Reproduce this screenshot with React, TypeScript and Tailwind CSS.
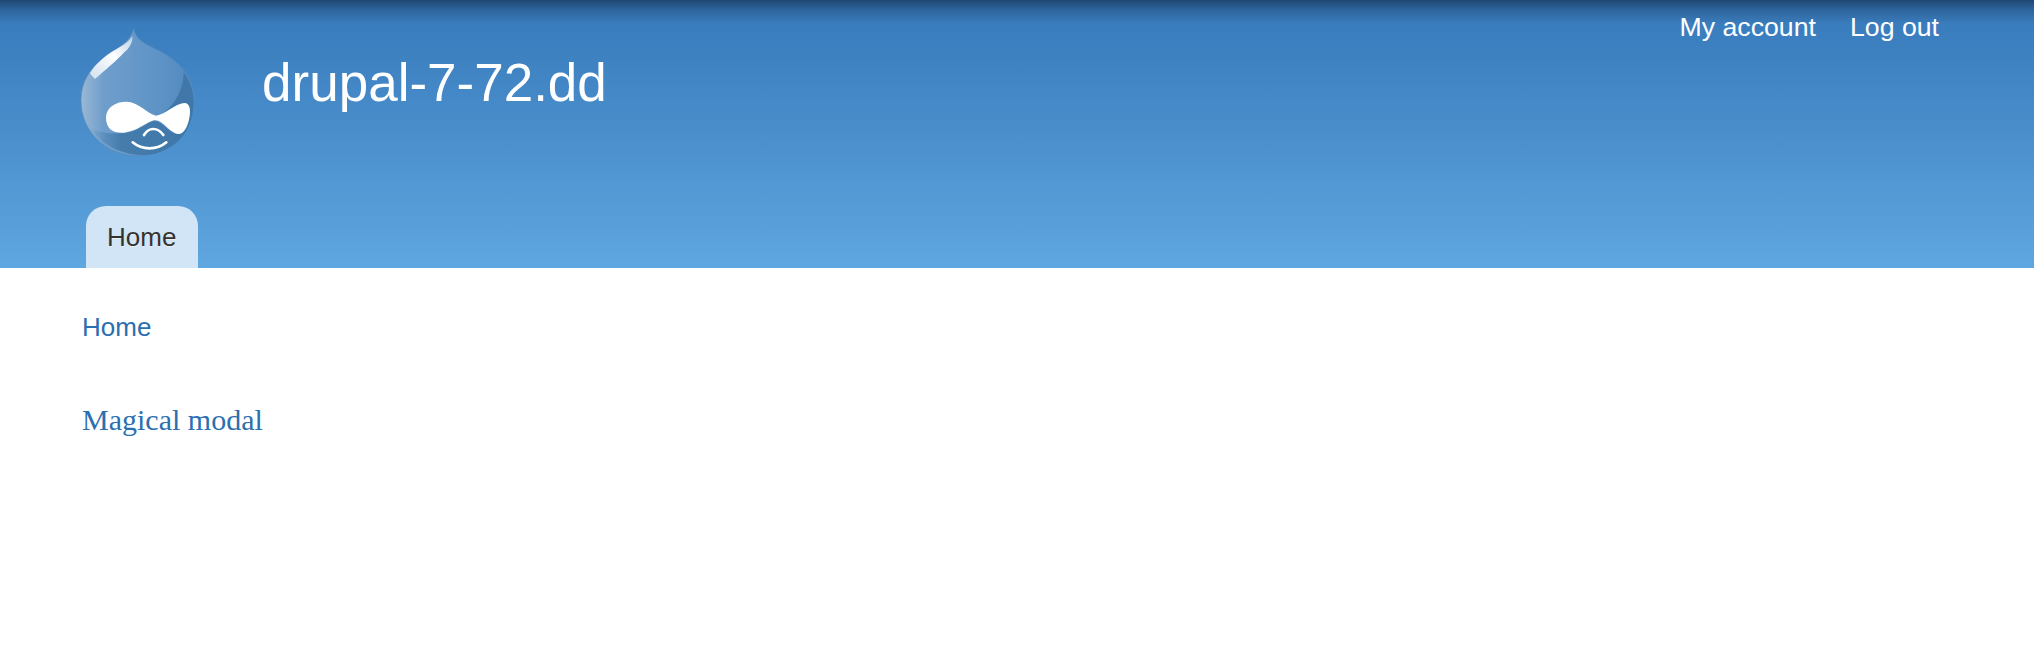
function DrupalLogo() {
  const drop =
    "M280 85C284 112 306 128 345 146C420 182 461 232 460 300C459 392 385 466 290 466C195 466 122 392 122 300C122 235 160 190 215 155C250 133 272 115 280 85Z";
  return (
    <svg viewBox="116 80 350 392" className="w-[116.7px] h-[130.7px] -m-[1.3px] shrink-0">
      <defs>
        <linearGradient id="drop" x1="0" y1="0" x2="1" y2="0">
          <stop offset="0" stopColor="#9ab8d4" />
          <stop offset="0.2" stopColor="#6f9ecb" />
          <stop offset="0.7" stopColor="#5d93c7" />
          <stop offset="1" stopColor="#5289bd" />
        </linearGradient>
        <linearGradient id="shade" x1="0" y1="0" x2="1" y2="0">
          <stop offset="0" stopColor="#3f77a8" stopOpacity="0" />
          <stop offset="0.3" stopColor="#3f77a8" stopOpacity="0.85" />
          <stop offset="1" stopColor="#3f77a8" />
        </linearGradient>
        <linearGradient id="gloss" x1="1" y1="0" x2="0" y2="1">
          <stop offset="0" stopColor="#dfeaf4" stopOpacity="0.7" />
          <stop offset="0.45" stopColor="#ffffff" />
          <stop offset="1" stopColor="#ffffff" stopOpacity="0.65" />
        </linearGradient>
        <filter id="soft" x="-5%" y="-5%" width="110%" height="110%">
          <feGaussianBlur stdDeviation="1.8" />
        </filter>
      </defs>
      <g filter="url(#soft)">
        <path d={drop} fill="url(#drop)" stroke="#5a8cba" strokeWidth="2" />
        <path
          d="M430 215C455 250 464 290 458 330C450 395 410 442 345 460C290 472 205 458 150 385C190 400 222 400 250 398C295 396 320 362 345 362C365 362 385 398 410 401C425 403 442 380 447 350C452 325 445 308 430 308C405 308 375 345 350 350C395 325 428 280 430 215Z"
          fill="url(#shade)"
        />
        <path
          d="M276 106C278 126 268 142 252 156C228 182 194 210 164 236C158 230 152 224 149 218C165 190 195 166 225 148C250 134 268 122 276 106Z"
          fill="url(#gloss)"
        />
        <path
          d="M197 352C197 322 225 304 258 304C295 304 320 340 347 346C375 342 405 310 432 308C447 308 452 325 447 352C442 382 428 403 412 401C388 398 368 360 345 360C322 360 298 392 250 397C218 399 197 385 197 352Z"
          fill="#ffffff"
        />
        <path d="M277 426C305 450 350 450 378 426" fill="none" stroke="#ffffff" strokeWidth="8" strokeLinecap="round" />
        <path d="M311 404C325 380 352 380 369 404" fill="none" stroke="#ffffff" strokeWidth="8" strokeLinecap="round" />
      </g>
    </svg>
  );
}

export default function App() {
  return (
    <div className="min-h-[648px] bg-white font-['Liberation_Sans',Arial,sans-serif]">
      <header className="h-[268px] flex flex-col justify-between bg-[linear-gradient(to_bottom,#1f4674_0px,#2f659c_10px,#3a7dbe_24px,#3f82c2_60px,#5fa7e0_268px)]">
        <div className="flex items-start pl-[80px] pr-[95px]">
          <div className="pt-[28px]">
            <DrupalLogo />
          </div>
          <div className="ml-[68px] mt-[53px] text-[53px] leading-[60px] text-white">drupal-7-72.dd</div>
          <nav className="ml-auto mt-[11px] flex gap-[34px] text-[26.7px] leading-[32px] text-white">
            <a href="#">My account</a>
            <a href="#">Log out</a>
          </nav>
        </div>
        <div className="pl-[86px]">
          <a href="#" className="inline-block h-[62px] rounded-t-[20px] bg-[#d2e5f6] pl-[21px] pr-[22px] pt-[15px] text-[26px] leading-[32px] text-[#333333] [text-shadow:0_1px_#eeeeee]">
            Home
          </a>
        </div>
      </header>
      <main className="pl-[82px]">
        <div className="pt-[43px] text-[26px] leading-[32px] text-[#2b6fb0]">
          <a href="#">Home</a>
        </div>
        <div className="pt-[61px] font-['Liberation_Serif',Georgia,serif] text-[30px] leading-[32px] text-[#2b6fb0]">
          <a href="#">Magical modal</a>
        </div>
      </main>
    </div>
  );
}
